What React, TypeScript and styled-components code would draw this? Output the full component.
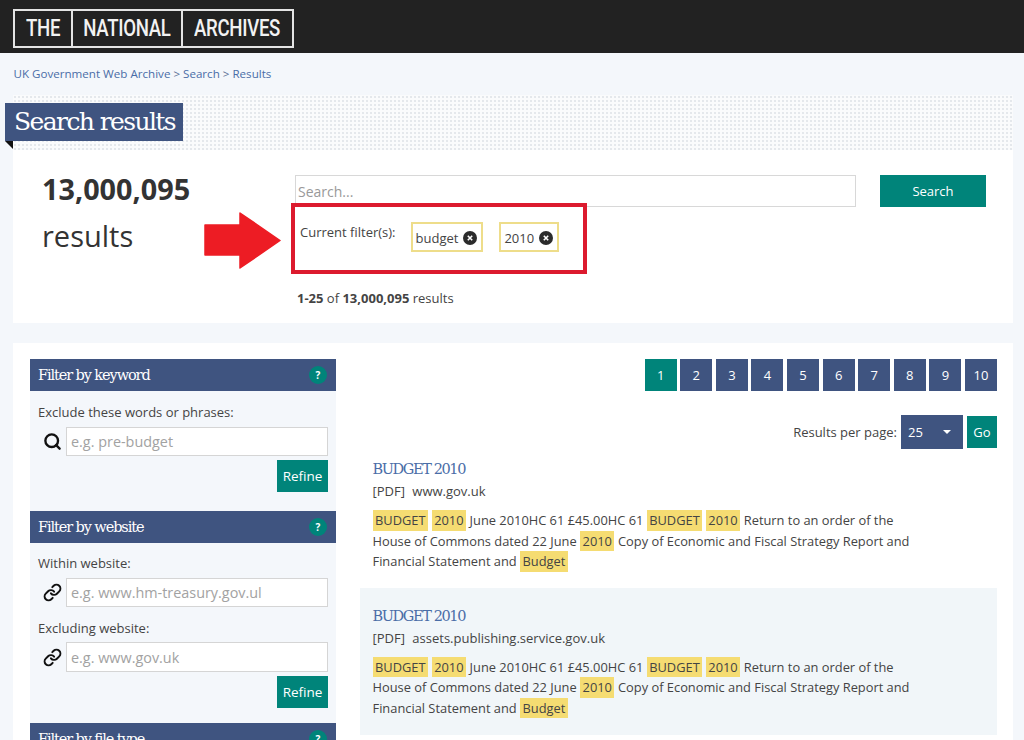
import React, { FC } from 'react';
import styled, { createGlobalStyle } from 'styled-components';
import { Search as SearchIcon, Link as LinkIcon } from 'lucide-react';

const GlobalStyle = createGlobalStyle`
  html, body {
    margin: 0;
    padding: 0;
    background: #f4f7fb;
    font-family: 'Open Sans', 'Liberation Sans', sans-serif;
    color: #444;
    overflow: hidden;
  }
  * { box-sizing: border-box; }
`;

const navy = '#3f5480';
const teal = '#00847a';
const slab = "'DejaVu Serif', 'Liberation Serif', serif";

const Page = styled.div`
  width: 1024px;
  height: 740px;
  overflow: hidden;
`;

const Header = styled.header`
  height: 53px;
  background: #222;
  padding: 9px 0 0 13px;
`;

const Logo = styled.div`
  display: inline-flex;
  height: 39px;
  border: 2px solid #e4e4e4;
`;

const LogoWord = styled.span<{ $w: number }>`
  width: ${(p) => p.$w}px;
  display: flex;
  align-items: center;
  justify-content: center;
  & + & {
    border-left: 2px solid #e4e4e4;
  }
`;

const LogoText = styled.span`
  display: block;
  color: #f2f2f2;
  font-family: Roboto, sans-serif;
  font-weight: 500;
  font-size: 23px;
  letter-spacing: -0.4px;
  transform: scaleX(0.81);
`;

const Crumbs = styled.nav`
  height: 42px;
  padding: 14px 0 0 13.5px;
  font-size: 11.6px;
  line-height: 14px;
  color: #5a6f96;
  a {
    color: #4a6da7;
    text-decoration: none;
  }
`;

const TopPanel = styled.section`
  position: relative;
  margin: 0 11px 0 13px;
  height: 228px;
  background: #fff;
  padding-top: 80px;
  display: grid;
  grid-template-columns: 282px 561px 130px;
  grid-template-rows: 32px auto;
  &::before {
    content: '';
    position: absolute;
    left: 0;
    right: 0;
    top: 0;
    height: 55px;
    background-color: #fafbfc;
    background-image: radial-gradient(#d9dde3 0.6px, transparent 0.9px);
    background-size: 4px 4px;
  }
`;

const Title = styled.h1`
  position: absolute;
  left: -8px;
  top: 8px;
  margin: 0;
  height: 38px;
  width: 178px;
  background: ${navy};
  color: #fff;
  font-family: ${slab};
  font-weight: 400;
  font-size: 25px;
  letter-spacing: -1.6px;
  line-height: 38px;
  padding-left: 9px;
  &::after {
    content: '';
    position: absolute;
    left: 0;
    top: 38px;
    border-top: 8px solid #111;
    border-left: 8px solid transparent;
  }
`;

const Count = styled.div`
  grid-row: 1 / 3;
  padding: 0 0 0 29px;
  color: #333;
  font-size: 29px;
  line-height: 47px;
  margin-top: -10px;
  strong {
    display: block;
    font-size: 28.8px;
    font-weight: 700;
  }
`;

const SearchInput = styled.div`
  height: 32px;
  border: 1px solid #d8d8d8;
  padding: 7px 0 0 2px;
  font-size: 14px;
  line-height: 18px;
  color: #999;
`;

const SearchButton = styled.button`
  justify-self: end;
  width: 106px;
  height: 32px;
  border: 0;
  background: ${teal};
  color: #fff;
  font: 13px 'Open Sans', sans-serif;
`;

const FilterColumn = styled.div`
  grid-column: 2 / 4;
  margin-top: -4px;
  position: relative;
  z-index: 1;
`;

const FilterBox = styled.div`
  position: relative;
  width: 296px;
  height: 71px;
  margin-left: -4px;
  border: 4px solid #dc1a2e;
  display: flex;
  align-items: flex-start;
  padding: 15px 0 0 5px;
  font-size: 13px;
  line-height: 20px;
`;

const Arrow = styled.svg`
  position: absolute;
  left: -91px;
  top: 5px;
  width: 77px;
  height: 57px;
`;

const Chips = styled.div`
  display: flex;
  gap: 16px;
  margin: 0 0 0 15px;
`;

const Chip = styled.span`
  height: 30px;
  display: flex;
  align-items: center;
  gap: 5px;
  padding: 1px 4px 0 3px;
  border: 2px solid #eedd8a;
  font-size: 13px;
  color: #444;
`;

const ChipClose = styled.svg`
  width: 14px;
  height: 14px;
`;

const Range = styled.p`
  margin: 14px 0 0 2px;
  font-size: 13px;
  line-height: 20px;
  color: #444;
`;

const MainPanel = styled.section`
  margin: 20px 11px 0 13px;
  background: #fff;
  padding: 16px 16px 0 17px;
  display: grid;
  grid-template-columns: 306px 637px;
  column-gap: 24px;
  height: 500px;
`;

const Sidebar = styled.aside`
  display: flex;
  flex-direction: column;
`;

const FilterHead = styled.h2`
  margin: 0;
  height: 32px;
  flex: none;
  background: ${navy};
  color: #fff;
  display: flex;
  align-items: center;
  justify-content: space-between;
  padding: 0 9px 0 8px;
  font-family: ${slab};
  font-weight: 400;
  font-size: 14.5px;
  letter-spacing: -1.1px;
`;

const Help = styled.span`
  width: 18px;
  height: 18px;
  border-radius: 50%;
  background: ${teal};
  color: #fff;
  font: 700 10px/18px 'Open Sans', sans-serif;
  text-align: center;
  letter-spacing: 0;
`;

const FilterBody = styled.div<{ $top: number; $bottom: number }>`
  background: #f4f7fb;
  padding: ${(p) => p.$top}px 8px ${(p) => p.$bottom}px;
  display: flex;
  flex-direction: column;
`;

const FieldRow = styled.div`
  display: flex;
  align-items: center;
  margin-bottom: 4px;
  svg {
    width: 19px;
    height: 19px;
    margin: 0 4.5px;
    color: #111;
    flex: none;
  }
`;

const FieldLabel = styled.label`
  font-size: 13px;
  line-height: 20px;
  color: #444;
  margin-bottom: 5px;
  ${FieldRow} + & {
    margin-top: 7px;
    margin-bottom: 4px;
  }
`;

const FieldInput = styled.div<{ $h?: number }>`
  flex: 1;
  height: ${(p) => p.$h ?? 29}px;
  background: #fff;
  border: 1px solid #d5d5d5;
  padding-left: 4px;
  display: flex;
  align-items: center;
  font-size: 14.4px;
  color: #a2a2a2;
`;

const Refine = styled.button`
  align-self: flex-end;
  width: 51px;
  height: 32px;
  border: 0;
  padding: 0;
  background: ${teal};
  color: #fff;
  font: 13.5px 'Open Sans', sans-serif;
`;

const Results = styled.div`
  display: flex;
  flex-direction: column;
`;

const Pager = styled.div`
  display: flex;
  justify-content: flex-end;
  gap: 3.6px;
`;

const PageButton = styled.span<{ $active?: boolean }>`
  width: 32px;
  height: 32px;
  display: flex;
  align-items: center;
  justify-content: center;
  background: ${(p) => (p.$active ? teal : navy)};
  color: #fff;
  font-size: 13px;
`;

const PerPage = styled.div`
  display: flex;
  align-items: center;
  justify-content: flex-end;
  margin-top: 24px;
  height: 34px;
  font-size: 13px;
  color: #444;
`;

const PerSelect = styled.span`
  width: 62px;
  height: 34px;
  margin-left: 4px;
  background: ${navy};
  color: #fff;
  display: flex;
  align-items: center;
  justify-content: space-between;
  padding: 0 12px 0 7px;
  font-size: 13px;
  &::after {
    content: '';
    border-top: 4px solid #fff;
    border-left: 4px solid transparent;
    border-right: 4px solid transparent;
  }
`;

const Go = styled.span`
  width: 30px;
  height: 32px;
  margin-left: 4px;
  background: ${teal};
  color: #fff;
  display: flex;
  align-items: center;
  justify-content: center;
  font-size: 13px;
`;

const ResultItem = styled.article<{ $shaded?: boolean }>`
  flex: none;
  background: ${(p) => (p.$shaded ? '#f1f6f9' : 'transparent')};
  padding: ${(p) => (p.$shaded ? '18.5px' : '11px')} 13px 0 12.5px;
  height: ${(p) => (p.$shaded ? '147px' : '139px')};
`;

const ResultTitle = styled.a`
  display: block;
  color: #4a6da7;
  font-family: ${slab};
  font-size: 14.5px;
  letter-spacing: -1.4px;
  line-height: 18px;
`;

const ResultMeta = styled.div`
  margin-top: 3px;
  font-size: 13px;
  line-height: 20px;
  word-spacing: 4px;
  color: #444;
`;

const Snippet = styled.p`
  margin: 9px 0 0;
  width: 560px;
  font-size: 12.85px;
  line-height: 20.5px;
  color: #444;
`;

const Mark = styled.mark`
  display: inline-block;
  background: #f5dc72;
  color: #444;
  padding: 0 2.5px;
  margin-right: 0.25px;
`;

const Snip: FC = () => (
  <Snippet>
    <Mark>BUDGET</Mark> <Mark>2010</Mark> June 2010HC 61 £45.00HC 61 <Mark>BUDGET</Mark> <Mark>2010</Mark> Return to
    an order of the House of Commons dated 22 June <Mark>2010</Mark> Copy of Economic and Fiscal Strategy Report and
    Financial Statement and <Mark>Budget</Mark>
  </Snippet>
);

const pages = [1, 2, 3, 4, 5, 6, 7, 8, 9, 10];

const Close: FC = () => (
  <ChipClose viewBox="0 0 14 14">
    <circle cx="7" cy="7" r="7" fill="#2b2b2b" />
    <path d="M4.8 4.8l4.4 4.4M9.2 4.8l-4.400 4.400" stroke="#fff" strokeWidth="1.6" />
  </ChipClose>
);

const App: FC = () => (
  <Page>
    <GlobalStyle />
    <Header>
      <Logo>
        <LogoWord $w={56}>
          <LogoText>THE</LogoText>
        </LogoWord>
        <LogoWord $w={110}>
          <LogoText>NATIONAL</LogoText>
        </LogoWord>
        <LogoWord $w={111}>
          <LogoText>ARCHIVES</LogoText>
        </LogoWord>
      </Logo>
    </Header>
    <Crumbs>
      <a href="#a">UK Government Web Archive</a> &gt; <a href="#b">Search</a> &gt; <a href="#c">Results</a>
    </Crumbs>
    <TopPanel>
      <Title>Search results</Title>
      <Count>
        <strong>13,000,095</strong>
        results
      </Count>
      <SearchInput>Search...</SearchInput>
      <SearchButton>Search</SearchButton>
      <FilterColumn>
        <FilterBox>
          <Arrow viewBox="0 0 77 57">
            <path d="M1 13h35V1l40 27.500-40 27.500V43H1z" fill="#ed1c24" stroke="#ed1c24" strokeWidth="1.500" strokeLinejoin="round" />
          </Arrow>
          Current filter(s):
          <Chips>
            <Chip>
              budget <Close />
            </Chip>
            <Chip>
              2010 <Close />
            </Chip>
          </Chips>
        </FilterBox>
        <Range>
          <strong>1-25</strong> of <strong>13,000,095</strong> results
        </Range>
      </FilterColumn>
    </TopPanel>
    <MainPanel>
      <Sidebar>
        <FilterHead>
          Filter by keyword <Help>?</Help>
        </FilterHead>
        <FilterBody $top={11} $bottom={19}>
          <FieldLabel>Exclude these words or phrases:</FieldLabel>
          <FieldRow>
            <SearchIcon strokeWidth={3} />
            <FieldInput>e.g. pre-budget</FieldInput>
          </FieldRow>
          <Refine>Refine</Refine>
        </FilterBody>
        <FilterHead>
          Filter by website <Help>?</Help>
        </FilterHead>
        <FilterBody $top={10} $bottom={15}>
          <FieldLabel>Within website:</FieldLabel>
          <FieldRow>
            <LinkIcon strokeWidth={2.5} />
            <FieldInput>e.g. www.hm-treasury.gov.ul</FieldInput>
          </FieldRow>
          <FieldLabel>Excluding website:</FieldLabel>
          <FieldRow>
            <LinkIcon strokeWidth={2.5} />
            <FieldInput $h={30}>e.g. www.gov.uk</FieldInput>
          </FieldRow>
          <Refine>Refine</Refine>
        </FilterBody>
        <FilterHead>
          Filter by file type <Help>?</Help>
        </FilterHead>
      </Sidebar>
      <Results>
        <Pager>
          {pages.map((n) => (
            <PageButton key={n} $active={n === 1}>
              {n}
            </PageButton>
          ))}
        </Pager>
        <PerPage>
          Results per page:
          <PerSelect>25</PerSelect>
          <Go>Go</Go>
        </PerPage>
        <ResultItem>
          <ResultTitle>BUDGET 2010</ResultTitle>
          <ResultMeta>[PDF] www.gov.uk</ResultMeta>
          <Snip />
        </ResultItem>
        <ResultItem $shaded>
          <ResultTitle>BUDGET 2010</ResultTitle>
          <ResultMeta>[PDF] assets.publishing.service.gov.uk</ResultMeta>
          <Snip />
        </ResultItem>
      </Results>
    </MainPanel>
  </Page>
);

export default App;
